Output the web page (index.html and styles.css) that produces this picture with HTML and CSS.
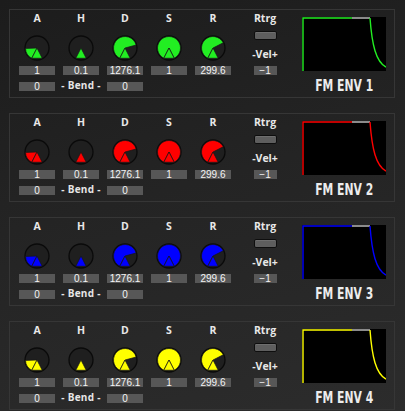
FILE: index.html
```html
<!DOCTYPE html>
<html>
<head>
<meta charset="utf-8">
<link rel="stylesheet" href="styles.css">
</head>
<body>
<svg class="defs" width="0" height="0" aria-hidden="true">
  <defs>
    <symbol id="kA" viewBox="0 0 26 26">
      <circle class="ring" cx="13" cy="13" r="12"/>
      <path class="wedge" fill="currentColor" d="M13 13L7.78 23.25A11.5 11.5 0 0 1 1.51 13.4Z"/>
      <path class="wedge" fill="currentColor" d="M13 13L7.78 23.25L18.22 23.25Z"/>
    </symbol>
    <symbol id="kH" viewBox="0 0 26 26">
      <circle class="ring" cx="13" cy="13" r="12"/>
      <path class="wedge" fill="currentColor" d="M13 13L7.78 23.25L18.22 23.25Z"/>
    </symbol>
    <symbol id="kD" viewBox="0 0 26 26">
      <circle class="ring" cx="13" cy="13" r="12"/>
      <path class="wedge" fill="currentColor" d="M13 13L7.78 23.25A11.5 11.5 0 1 1 24.11 10.02Z"/>
      <path class="wedge" fill="currentColor" d="M13 13L7.78 23.25L18.22 23.25Z"/>
    </symbol>
    <symbol id="kS" viewBox="0 0 26 26">
      <circle class="ring" cx="13" cy="13" r="12"/>
      <path class="wedge" fill="currentColor" d="M13 13L7.78 23.25A11.5 11.5 0 1 1 18.22 23.25Z"/>
      <path class="wedge" fill="currentColor" d="M13 13L7.78 23.25L18.22 23.25Z"/>
    </symbol>
    <symbol id="kR" viewBox="0 0 26 26">
      <circle class="ring" cx="13" cy="13" r="12"/>
      <path class="wedge" fill="currentColor" d="M13 13L7.78 23.25A11.5 11.5 0 1 1 23.25 7.78Z"/>
      <path class="wedge" fill="currentColor" d="M13 13L7.78 23.25L18.22 23.25Z"/>
    </symbol>
    <symbol id="env" viewBox="0 0 84 54">
      <rect width="84" height="54" fill="#000"/>
      <path d="M50 1H68" stroke="#c8c8c8" stroke-width="1.4" fill="none"/>
      <path d="M1 54V1H50" stroke="currentColor" stroke-width="1.4" fill="none"/>
      <path d="M68 1C70 28 74 45 84 50" stroke="currentColor" stroke-width="1.4" fill="none"/>
    </symbol>
  </defs>
</svg>

<main class="page">
  <section class="panel green">
    <div class="col"><div class="lbl">A</div><svg class="knob"><use href="#kA"/></svg><div class="val">1</div><div class="val">0</div></div>
    <div class="col"><div class="lbl">H</div><svg class="knob"><use href="#kH"/></svg><div class="val">0.1</div><div class="bend">- Bend -</div></div>
    <div class="col"><div class="lbl">D</div><svg class="knob"><use href="#kD"/></svg><div class="val">1276.1</div><div class="val">0</div></div>
    <div class="col"><div class="lbl">S</div><svg class="knob"><use href="#kS"/></svg><div class="val">1</div></div>
    <div class="col"><div class="lbl">R</div><svg class="knob"><use href="#kR"/></svg><div class="val">299.6</div></div>
    <div class="col rt"><div class="lbl">Rtrg</div><div class="btn"></div><div class="vel">-Vel+</div><div class="val small">−1</div></div>
    <div class="col gcol"><svg class="graph"><use href="#env"/></svg><div class="title"><span>FM ENV 1</span></div></div>
  </section>

  <section class="panel red">
    <div class="col"><div class="lbl">A</div><svg class="knob"><use href="#kA"/></svg><div class="val">1</div><div class="val">0</div></div>
    <div class="col"><div class="lbl">H</div><svg class="knob"><use href="#kH"/></svg><div class="val">0.1</div><div class="bend">- Bend -</div></div>
    <div class="col"><div class="lbl">D</div><svg class="knob"><use href="#kD"/></svg><div class="val">1276.1</div><div class="val">0</div></div>
    <div class="col"><div class="lbl">S</div><svg class="knob"><use href="#kS"/></svg><div class="val">1</div></div>
    <div class="col"><div class="lbl">R</div><svg class="knob"><use href="#kR"/></svg><div class="val">299.6</div></div>
    <div class="col rt"><div class="lbl">Rtrg</div><div class="btn"></div><div class="vel">-Vel+</div><div class="val small">−1</div></div>
    <div class="col gcol"><svg class="graph"><use href="#env"/></svg><div class="title"><span>FM ENV 2</span></div></div>
  </section>

  <section class="panel blue">
    <div class="col"><div class="lbl">A</div><svg class="knob"><use href="#kA"/></svg><div class="val">1</div><div class="val">0</div></div>
    <div class="col"><div class="lbl">H</div><svg class="knob"><use href="#kH"/></svg><div class="val">0.1</div><div class="bend">- Bend -</div></div>
    <div class="col"><div class="lbl">D</div><svg class="knob"><use href="#kD"/></svg><div class="val">1276.1</div><div class="val">0</div></div>
    <div class="col"><div class="lbl">S</div><svg class="knob"><use href="#kS"/></svg><div class="val">1</div></div>
    <div class="col"><div class="lbl">R</div><svg class="knob"><use href="#kR"/></svg><div class="val">299.6</div></div>
    <div class="col rt"><div class="lbl">Rtrg</div><div class="btn"></div><div class="vel">-Vel+</div><div class="val small">−1</div></div>
    <div class="col gcol"><svg class="graph"><use href="#env"/></svg><div class="title"><span>FM ENV 3</span></div></div>
  </section>

  <section class="panel yellow">
    <div class="col"><div class="lbl">A</div><svg class="knob"><use href="#kA"/></svg><div class="val">1</div><div class="val">0</div></div>
    <div class="col"><div class="lbl">H</div><svg class="knob"><use href="#kH"/></svg><div class="val">0.1</div><div class="bend">- Bend -</div></div>
    <div class="col"><div class="lbl">D</div><svg class="knob"><use href="#kD"/></svg><div class="val">1276.1</div><div class="val">0</div></div>
    <div class="col"><div class="lbl">S</div><svg class="knob"><use href="#kS"/></svg><div class="val">1</div></div>
    <div class="col"><div class="lbl">R</div><svg class="knob"><use href="#kR"/></svg><div class="val">299.6</div></div>
    <div class="col rt"><div class="lbl">Rtrg</div><div class="btn"></div><div class="vel">-Vel+</div><div class="val small">−1</div></div>
    <div class="col gcol"><svg class="graph"><use href="#env"/></svg><div class="title"><span>FM ENV 4</span></div></div>
  </section>
</main>
</body>
</html>
```

FILE: styles.css
```css
html, body {
  margin: 0;
  padding: 0;
}
body {
  width: 405px;
  height: 411px;
  overflow: hidden;
  background: linear-gradient(165deg, #1c1c1c 0%, #242424 45%, #2c2c2c 100%);
  font-family: "Open Sans", "DejaVu Sans", sans-serif;
  color: #e6e6e6;
}
.defs {
  position: absolute;
  width: 0;
  height: 0;
}
.page {
  padding: 9px 0 0 9px;
  display: flex;
  flex-direction: column;
  gap: 15px;
}
.panel {
  box-sizing: border-box;
  width: 386px;
  height: 89px;
  border: 1px solid #363636;
  padding: 2px 0 0 5px;
  display: flex;
  align-items: flex-start;
}
.green { color: #22ee22; }
.red { color: #ff0000; }
.blue { color: #0000ff; }
.yellow { color: #ffff00; }

.col {
  width: 44px;
  display: flex;
  flex-direction: column;
  align-items: center;
}
.lbl {
  height: 12px;
  line-height: 12px;
  font-size: 10.5px;
  font-weight: bold;
  color: #e8e8e8;
}
.knob {
  width: 26px;
  height: 26px;
  margin-top: 11px;
}
.ring {
  fill: #1f1f1f;
  stroke: #0a0a0a;
  stroke-width: 1.3;
}
.wedge {
  stroke: #151515;
  stroke-width: 0.7;
  stroke-linejoin: round;
}
.val {
  box-sizing: border-box;
  width: 36px;
  height: 9px;
  line-height: 9px;
  margin-top: 5px;
  background: #575757;
  color: #f4f4f4;
  font-family: "Liberation Sans", sans-serif;
  font-size: 10px;
  text-align: center;
}
.val + .val {
  margin-top: 7px;
}
.bend {
  margin-top: 4px;
  height: 12px;
  line-height: 12px;
  font-size: 10px;
  font-weight: bold;
  letter-spacing: 0.3px;
  white-space: nowrap;
  color: #e6e6e6;
}
.rt {
  width: 60px;
}
.btn {
  box-sizing: border-box;
  width: 23px;
  height: 9px;
  margin-top: 7px;
  background: #5e5e5e;
  border: 1px solid #0e0e0e;
  border-radius: 2px;
  box-shadow: inset 0 1px 0 #6e6e6e;
}
.vel {
  margin-top: 8px;
  height: 12px;
  line-height: 12px;
  font-size: 10.5px;
  font-weight: bold;
  color: #e8e8e8;
}
.val.small {
  width: 23px;
  margin-top: 6px;
}
.gcol {
  width: 84px;
  margin-left: 7px;
}
.graph {
  width: 84px;
  height: 54px;
  margin-top: 5px;
  display: block;
}
.title {
  margin-top: 7px;
  height: 16px;
  line-height: 16px;
  font-family: "DejaVu Sans Condensed", "DejaVu Sans", sans-serif;
  font-weight: bold;
  font-size: 15px;
  color: #ececec;
  white-space: nowrap;
}
.title span {
  display: inline-block;
  transform: scaleX(0.8);
  transform-origin: center;
}
```
